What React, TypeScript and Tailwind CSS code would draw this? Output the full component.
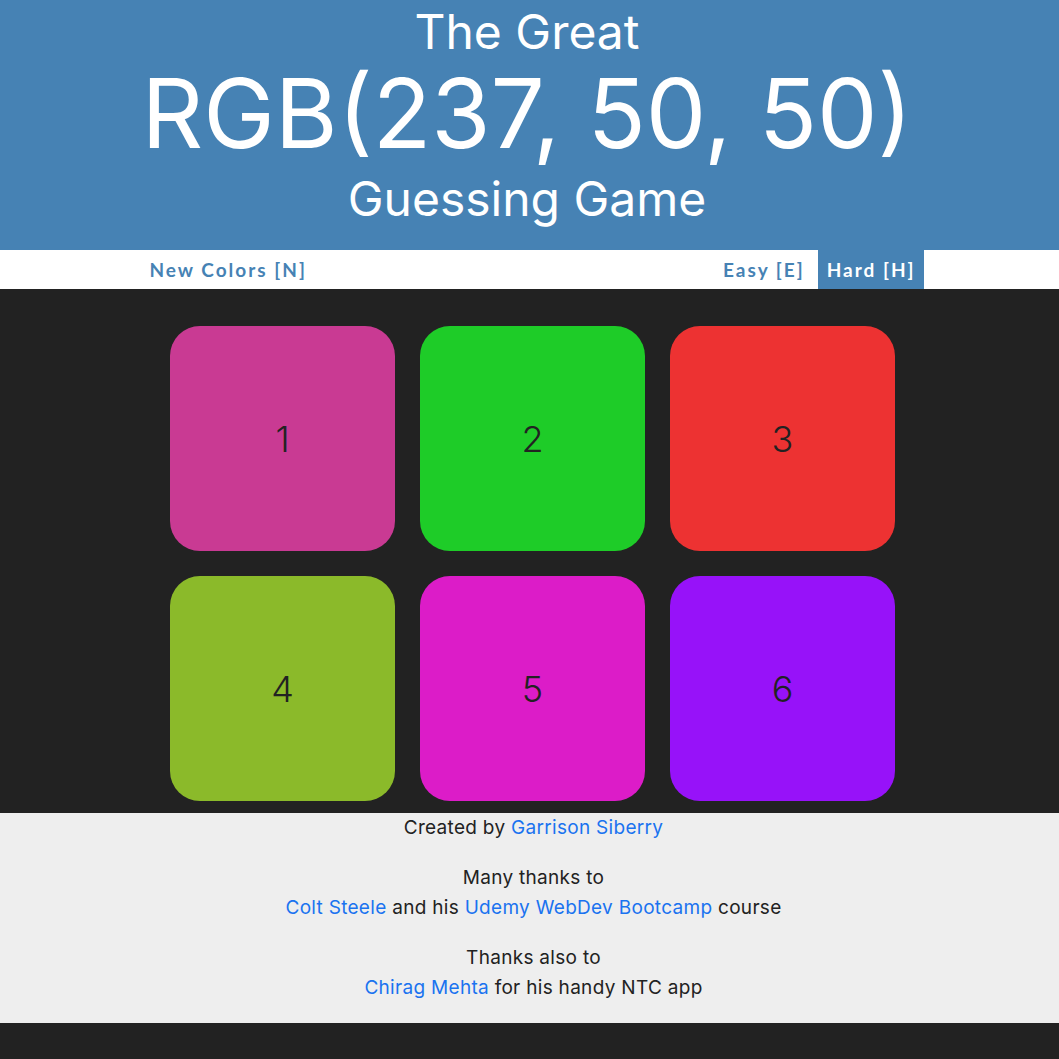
import React from "react";

const squares = [
  { n: 1, c: "#c93a93" },
  { n: 2, c: "#1ecc28" },
  { n: 3, c: "#ed3232" },
  { n: 4, c: "#8bba2a" },
  { n: 5, c: "#dc1cc8" },
  { n: 6, c: "#9712f9" },
];

export default function App() {
  return (
    <div className="min-h-[1059px] bg-[#222222] font-['Inter',sans-serif]">
      <header className="bg-[#4682b4] text-white text-center h-[250px] flex flex-col items-center pt-[3px] pr-[5px]">
        <div className="text-[48px] leading-[58px]">The Great</div>
        <div className="text-[96px] leading-[104px]">RGB(237, 50, 50)</div>
        <div className="text-[48px] leading-[58px] mt-[5px]">Guessing Game</div>
      </header>
      <nav className="bg-white h-[39px] flex justify-center">
        <div className="w-[800px] flex items-stretch font-['Lato',sans-serif] font-bold text-[19px] tracking-[2px]">
          <button className="text-[#4682b4] px-[20px] pt-[2px]">New Colors [N]</button>
          <div className="flex-1" />
          <button className="text-[#4682b4] pl-[8px] pr-[13px] pt-[2px]">Easy [E]</button>
          <button className="text-white bg-[#4682b4] pl-[9px] pr-[8px] pt-[2px] mr-[6px]">Hard [H]</button>
        </div>
      </nav>
      <main className="bg-[#222222] pt-[37px] pb-[12px] flex justify-center pl-[6px]">
        <div className="grid grid-cols-3 gap-[25px]">
          {squares.map((s) => (
            <div
              key={s.n}
              className="w-[225px] h-[225px] rounded-[30px] flex items-center justify-center text-[36px] font-light text-[#222222]"
              style={{ backgroundColor: s.c }}
            >
              {s.n}
            </div>
          ))}
        </div>
      </main>
      <footer className="bg-[#eeeeee] text-[#222222] text-center text-[19px] tracking-[0.3px] leading-[30px] pb-[20px] pl-[8px]">
        <p>
          Created by <a className="text-[#1a73f0]">Garrison Siberry</a>
        </p>
        <p className="mt-[20px]">
          Many thanks to
          <br />
          <a className="text-[#1a73f0]">Colt Steele</a> and his{" "}
          <a className="text-[#1a73f0]">Udemy WebDev Bootcamp</a> course
        </p>
        <p className="mt-[20px]">
          Thanks also to
          <br />
          <a className="text-[#1a73f0]">Chirag Mehta</a> for his handy NTC app
        </p>
      </footer>
    </div>
  );
}
